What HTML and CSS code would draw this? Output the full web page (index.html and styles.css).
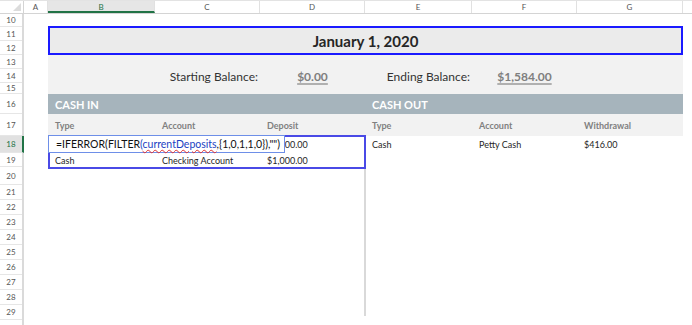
FILE: index.html
```html
<!DOCTYPE html>
<html>
<head>
    <title>Cash Flow</title>
    <link rel="stylesheet" href="styles.css">
</head>
<body>
    <div class="colhead">
        <div class="corner"><span class="tri"></span></div>
        <div class="ch cw-a">A</div>
        <div class="ch cw-b active">B</div>
        <div class="ch cw-c">C</div>
        <div class="ch cw-d">D</div>
        <div class="ch cw-e">E</div>
        <div class="ch cw-f">F</div>
        <div class="ch cw-g">G</div>
        <div class="ch cw-rest"></div>
    </div>
    <div class="body">
        <div class="rowhead">
            <div>10</div><div>11</div><div>12</div><div>13</div><div>14</div>
            <div>15</div><div>16</div><div>17</div><div class="active">18</div><div>19</div>
            <div>20</div><div>21</div><div>22</div><div>23</div><div>24</div>
            <div>25</div><div>26</div><div>27</div><div>28</div><div>29</div>
        </div>
        <div class="cells">
            <div class="title">January 1, 2020</div>

            <div class="bal-band"></div>
            <div class="bal-label start">Starting Balance:</div>
            <div class="bal-value start">$0.00</div>
            <div class="bal-label end">Ending Balance:</div>
            <div class="bal-value end">$1,584.00</div>

            <div class="band"></div>
            <div class="band-text in">CASH IN</div>
            <div class="band-text out">CASH OUT</div>

            <div class="labels"></div>
            <div class="lbl c-b">Type</div>
            <div class="lbl c-c">Account</div>
            <div class="lbl c-d">Deposit</div>
            <div class="lbl c-e">Type</div>
            <div class="lbl c-f">Account</div>
            <div class="lbl c-g">Withdrawal</div>

            <div class="split"></div>

            <!-- the in-cell editor hides the start of this value -->
            <div class="cell r18 c-d hidden-start"><span>$1,000.00</span></div>
            <div class="cell r18 c-e">Cash</div>
            <div class="cell r18 c-f">Petty Cash</div>
            <div class="cell r18 c-g">$416.00</div>

            <div class="cell r19 c-b">Cash</div>
            <div class="cell r19 c-c">Checking Account</div>
            <div class="cell r19 c-d">$1,000.00</div>

            <div class="selection"></div>
            <div class="editor">=IFERROR(FILTER<span class="ref">(<span class="name">currentDeposits</span></span>,{1,0,1,1,0}),"")</div>
        </div>
    </div>
</body>
</html>
```

FILE: styles.css
```css
body {
    margin: 0;
    background: #fff;
    font-family: Lato, "Liberation Sans", sans-serif;
    color: #262626;
    overflow: hidden;
}

/* column headers */
.colhead {
    display: flex;
    height: 14px;
    border-top: 1px solid #e3e3e3;
    border-bottom: 1px solid #d4d4d4;
    box-sizing: border-box;
}

.corner {
    width: 24px;
    position: relative;
    border-right: 1px solid #d4d4d4;
    box-sizing: border-box;
}

.tri {
    position: absolute;
    right: 2px;
    bottom: 2px;
    width: 0;
    height: 0;
    border-left: 8px solid transparent;
    border-bottom: 8px solid #dcdcdc;
}

.ch {
    box-sizing: border-box;
    border-right: 1px solid #e1e1e1;
    font-size: 8px;
    color: #555;
    text-align: center;
    line-height: 12px;
}

.ch.active {
    background: #e6e6e6;
    color: #217346;
    border-bottom: 2px solid #217346;
}

.cw-a { width: 24px; }
.cw-b { width: 107px; }
.cw-c { width: 105px; }
.cw-d { width: 105px; }
.cw-e { width: 107px; }
.cw-f { width: 105px; }
.cw-g { width: 106px; }
.cw-rest { flex: 1; border-right: none; }

/* sheet body */
.body {
    display: flex;
}

.rowhead,
.cells {
    display: grid;
    grid-template-rows: 13px 14px 14px 14px 14px 11px 20px 22px 17px 14px 18px repeat(9, 15px) 6px;
}

.rowhead {
    width: 24px;
    border-right: 2px solid #dadada;
    box-sizing: border-box;
}

.rowhead div {
    border-bottom: 1px solid #e6e6e6;
    font-size: 8px;
    color: #555;
    display: flex;
    align-items: center;
    justify-content: center;
}

.rowhead div.active {
    background: #e1e1e1;
    color: #217346;
    margin-right: -2px;
    border-right: 2px solid #217346;
}

.cells {
    grid-template-columns: 24px 107px 105px 105px 107px 105px 106px 1fr;
    flex: 1;
}

.title {
    grid-row: 2 / 4;
    grid-column: 2 / 8;
    background: #ebebeb;
    border: 2px solid #1a1aff;
    margin: -1px 0 0 0;
    display: flex;
    align-items: center;
    justify-content: center;
    font-weight: bold;
    font-size: 15px;
    color: #262626;
}

.bal-band {
    grid-row: 4 / 7;
    grid-column: 2 / 8;
    background: #f2f2f2;
}

.bal-label,
.bal-value {
    grid-row: 5;
    display: flex;
    align-items: center;
    font-size: 12px;
}

.bal-label {
    justify-content: flex-end;
    color: #333;
    padding-right: 2px;
}

.bal-value {
    justify-content: center;
    color: #7f7f7f;
    font-weight: bold;
    text-decoration: underline;
    text-decoration-thickness: 2px;
    text-decoration-color: #b0b0b0;
    text-underline-offset: 2px;
}

.bal-label.start { grid-column: 3; }
.bal-value.start { grid-column: 4; }
.bal-label.end { grid-column: 5; }
.bal-value.end { grid-column: 6; }

.band {
    grid-row: 7;
    grid-column: 2 / 8;
    background: #a6b4bc;
}

.band-text {
    grid-row: 7;
    color: #fff;
    font-weight: bold;
    font-size: 11px;
    padding-left: 7px;
    display: flex;
    align-items: center;
}

.band-text.in { grid-column: 2; }
.band-text.out { grid-column: 5 / 7; }

.labels {
    grid-row: 8;
    grid-column: 2 / 8;
    background: #f2f2f2;
}

.lbl {
    grid-row: 8;
    font-size: 9px;
    color: #808080;
    font-weight: bold;
    padding-left: 7px;
    display: flex;
    align-items: center;
}

.cell {
    font-size: 9px;
    padding-left: 7px;
    display: flex;
    align-items: center;
    color: #262626;
}

.cell.hidden-start {
    margin-left: 25px;
    padding-left: 0;
    overflow: hidden;
    white-space: nowrap;
}

.cell.hidden-start span {
    margin-left: -18px;
}

.r18 { grid-row: 9; }
.r19 { grid-row: 10; }

.c-b { grid-column: 2; }
.c-c { grid-column: 3; }
.c-d { grid-column: 4; }
.c-e { grid-column: 5; }
.c-f { grid-column: 6; }
.c-g { grid-column: 7; }

.split {
    grid-row: 9 / 22;
    grid-column: 5;
    border-left: 2px solid #d9d9d9;
    margin: 0 0 10px -1px;
}

.selection {
    grid-row: 9 / 11;
    grid-column: 2 / 5;
    border: 2px solid #4a4ae6;
    margin: -1px -1px -2px 0;
    z-index: 1;
}

.editor {
    grid-row: 9;
    grid-column: 2 / 5;
    justify-self: start;
    width: 237px;
    box-sizing: border-box;
    background: #fff;
    border: 1px solid #6e8fe8;
    margin-top: -1px;
    padding-left: 7px;
    font-size: 10.5px;
    color: #111;
    display: flex;
    align-items: center;
    white-space: nowrap;
    z-index: 2;
}

.ref {
    color: #1a3fc2;
}

.name {
    text-decoration: underline wavy #e03030;
    text-decoration-thickness: 1px;
    text-underline-offset: 1px;
}
```
